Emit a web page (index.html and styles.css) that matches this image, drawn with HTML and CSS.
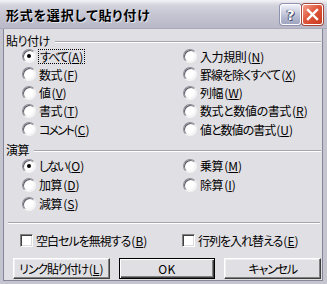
FILE: index.html
```html
<!DOCTYPE html>
<html lang="ja">
<head>
<meta charset="utf-8">
<title>形式を選択して貼り付け</title>
<link rel="stylesheet" href="styles.css">
</head>
<body>
<div class="window">
  <div class="titlebar">
    <span class="title">形式を選択して貼り付け</span>
    <div class="tbtns">
      <span class="tbtn help">?</span>
      <span class="tbtn close">
        <svg width="13" height="13" viewBox="0 0 13 13"><path d="M2 2 L11 11 M11 2 L2 11" stroke="#fff" stroke-width="2.4" stroke-linecap="square"/></svg>
      </span>
    </div>
  </div>
  <div class="frame">
    <div class="ghead g1"><span>貼り付け</span><i class="hline"></i></div>
    <div class="grid g1rows">
      <label class="opt"><span class="radio on"></span><span class="focus tight">すべて<span class="acc">(<u>A</u>)</span></span></label>
      <label class="opt"><span class="radio"></span><span>入力規則<span class="acc">(<u>N</u>)</span></span></label>
      <label class="opt"><span class="radio"></span><span>数式<span class="acc">(<u>F</u>)</span></span></label>
      <label class="opt"><span class="radio"></span><span class="kana">罫線を除くすべて<span class="acc">(<u>X</u>)</span></span></label>
      <label class="opt"><span class="radio"></span><span>値<span class="acc">(<u>V</u>)</span></span></label>
      <label class="opt"><span class="radio"></span><span>列幅<span class="acc">(<u>W</u>)</span></span></label>
      <label class="opt"><span class="radio"></span><span>書式<span class="acc">(<u>T</u>)</span></span></label>
      <label class="opt"><span class="radio"></span><span>数式と数値の書式<span class="acc">(<u>R</u>)</span></span></label>
      <label class="opt"><span class="radio"></span><span class="tight">コメント<span class="acc">(<u>C</u>)</span></span></label>
      <label class="opt"><span class="radio"></span><span class="kana">値と数値の書式<span class="acc">(<u>U</u>)</span></span></label>
    </div>
    <div class="ghead g2"><span>演算</span><i class="hline"></i></div>
    <div class="grid g2rows">
      <label class="opt"><span class="radio on"></span><span class="tight">しない<span class="acc">(<u>O</u>)</span></span></label>
      <label class="opt"><span class="radio"></span><span>乗算<span class="acc">(<u>M</u>)</span></span></label>
      <label class="opt"><span class="radio"></span><span>加算<span class="acc">(<u>D</u>)</span></span></label>
      <label class="opt"><span class="radio"></span><span>除算<span class="acc">(<u>I</u>)</span></span></label>
      <label class="opt"><span class="radio"></span><span>減算<span class="acc">(<u>S</u>)</span></span></label>
    </div>
    <div class="sep"></div>
    <div class="checks">
      <label class="chk"><span class="box"></span><span class="kana">空白セルを無視する<span class="acc">(<u>B</u>)</span></span></label>
      <label class="chk"><span class="box"></span><span class="kana">行列を入れ替える<span class="acc">(<u>E</u>)</span></span></label>
    </div>
    <div class="buttons">
      <button class="btn">リンク貼り付け<span class="acc">(<u>L</u>)</span></button>
      <button class="btn default">OK</button>
      <button class="btn">キャンセル</button>
    </div>
  </div>
</div>
</body>
</html>
```

FILE: styles.css
```css
html, body {
  margin: 0;
  padding: 0;
  width: 327px;
  height: 284px;
  overflow: hidden;
  background: #e0dfe3;
}

.window {
  width: 327px;
  height: 284px;
  display: flex;
  flex-direction: column;
  font-family: "Noto Sans CJK JP", "Noto Sans", sans-serif;
  font-size: 12px;
  font-feature-settings: "palt" 1;
  color: #000;
}

.titlebar {
  height: 29px;
  flex: none;
  box-sizing: border-box;
  display: flex;
  align-items: center;
  justify-content: space-between;
  padding: 0 4px 0 6px;
  background: linear-gradient(#f3f3f7 0%, #d4d4de 18%, #c4c4d1 55%, #b8b8c8 100%);
  border-bottom: 1px solid #a9a9b8;
}

.title {
  font-weight: bold;
  font-size: 13px;
  letter-spacing: 0.8px;
  color: #000;
  text-shadow: 1px 1px 0 rgba(255,255,255,0.6);
  margin-top: 1px;
}

.tbtns {
  display: flex;
  gap: 1px;
  margin-top: 1px;
}

.tbtn {
  width: 21px;
  height: 21px;
  box-sizing: border-box;
  border-radius: 3px;
  border: 1px solid #fff;
  display: flex;
  align-items: center;
  justify-content: center;
}

.help {
  background: linear-gradient(#eef0f8 0%, #b9bdd3 60%, #9ea3bf 100%);
  color: #fff;
  font-family: "DejaVu Sans", sans-serif;
  font-weight: bold;
  font-size: 14px;
  text-shadow: 0 0 1px #3a3f60, 1px 1px 0 #4a4f70, -1px 0 0 #4a4f70;
  box-shadow: 0 0 0 1px #8e92ae;
}

.close {
  background: linear-gradient(135deg, #f3a08e 0%, #e0573c 45%, #c63a20 100%);
  box-shadow: 0 0 0 1px #a8473a;
}

.frame {
  flex: 1;
  box-sizing: border-box;
  background: #e0dfe3;
  border-left: 3px solid #c5c5d0;
  border-right: 4px solid #c5c5d0;
  border-bottom: 3px solid #c5c5d0;
  box-shadow: inset 1px 0 #86869a, inset -1px 0 #86869a, inset 0 -1px #86869a;
  padding-left: 3px;
  padding-right: 2px;
  display: flex;
  flex-direction: column;
}

.ghead {
  height: 13px;
  display: flex;
  align-items: center;
  gap: 5px;
  line-height: 13px;
  letter-spacing: -0.5px;
}

.g1 { margin-top: 5px; }
.g2 { margin-top: 5px; }

.hline {
  flex: 1;
  height: 0;
  border-top: 1px solid #a7a6aa;
  border-bottom: 1px solid #fff;
  margin-top: 2px;
}

.grid {
  display: grid;
  grid-template-columns: 161px 1fr;
  padding-left: 16px;
}

.g1rows { grid-auto-rows: 18.25px; }
.g2rows { grid-auto-rows: 19px; }

.opt {
  display: flex;
  align-items: center;
  gap: 2px;
  white-space: nowrap;
  letter-spacing: -0.4px;
}

.kana { letter-spacing: -1px; }
.tight { letter-spacing: -2px; }

.acc {
  letter-spacing: 0;
  margin-left: 1px;
}

.radio {
  width: 12px;
  height: 12px;
  flex: none;
  border-radius: 50%;
  border: 1px solid;
  border-color: #8c8c96 #f4f4f6 #f4f4f6 #8c8c96;
  background: radial-gradient(circle at 40% 40%, #ffffff 0%, #ffffff 45%, #e6e6ea 100%);
  box-shadow: inset 1px 1px 0 #5c5c66;
  position: relative;
  margin-right: 1px;
}

.radio.on::after {
  content: "";
  position: absolute;
  left: 4px;
  top: 4px;
  width: 4px;
  height: 4px;
  border-radius: 50%;
  background: #000;
}

.focus {
  outline: 1px dotted #000;
  outline-offset: 0;
  padding: 0 1px;
  line-height: 13px;
}

u { text-decoration: underline; text-underline-offset: 1px; }

.sep {
  margin-top: 9px;
  margin-left: 2px;
  margin-right: 1px;
  height: 0;
  border-top: 1px solid #a7a6aa;
  border-bottom: 1px solid #fff;
}

.checks {
  display: grid;
  grid-template-columns: 162px 1fr;
  padding-left: 14px;
  margin-top: 8px;
  height: 14px;
}

.chk {
  display: flex;
  align-items: center;
  gap: 3px;
  white-space: nowrap;
}

.box {
  width: 13px;
  height: 13px;
  box-sizing: border-box;
  flex: none;
  background: #fff;
  border: 1px solid;
  border-color: #808080 #fff #fff #808080;
  box-shadow: inset 1px 1px 0 #404040, inset -1px -1px 0 #dcdce0;
}

.buttons {
  display: flex;
  gap: 9px;
  padding-left: 7px;
  margin-top: 12px;
}

.btn {
  width: 97px;
  height: 21px;
  box-sizing: border-box;
  padding: 0;
  white-space: nowrap;
  font-family: "Noto Sans CJK JP", "Noto Sans", sans-serif;
  font-size: 12px;
  font-feature-settings: "palt" 1;
  letter-spacing: -1.2px;
  color: #000;
  background: #e0dfe3;
  border: 1px solid;
  border-color: #fff #404040 #404040 #fff;
  box-shadow: inset -1px -1px 0 #808080, inset 1px 1px 0 #f0f0f2;
  border-radius: 0;
  line-height: 17px;
}

.btn.default {
  border: 1px solid #000;
  letter-spacing: 0.5px;
  box-shadow: inset 1px 1px 0 #fff, inset -1px -1px 0 #404040, inset -2px -2px 0 #808080;
}
```
